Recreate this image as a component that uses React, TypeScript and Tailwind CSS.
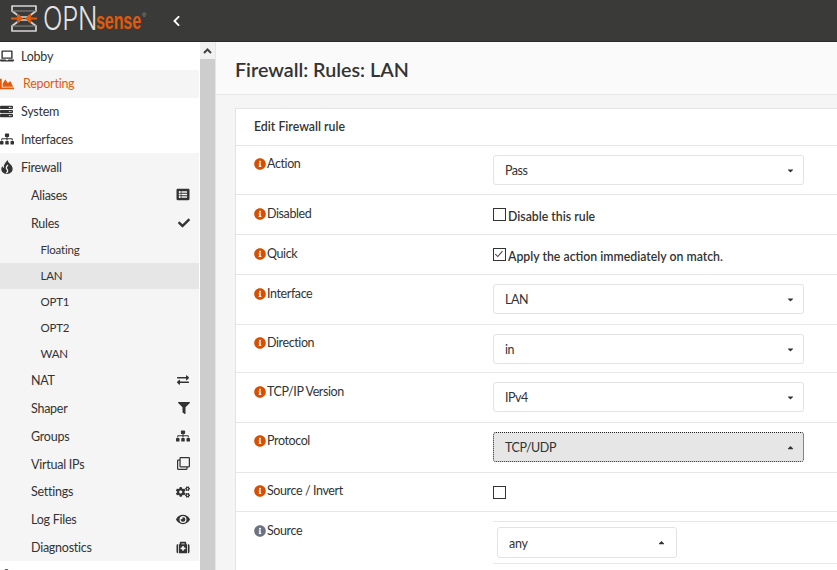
import React from "react";
import { FaLaptop, FaChartArea, FaServer, FaSitemap, FaListAlt, FaCheck, FaExchangeAlt, FaFilter, FaRegClone, FaCogs, FaCog, FaEye, FaMedkit, FaInfoCircle, FaChevronLeft, FaCaretDown, FaCaretUp } from "react-icons/fa";

function Logo() {
  return (
    <div className="flex items-center w-[161px] shrink-0 mb-[4px]">
      <svg width="26" height="27" viewBox="0 0 26 27" className="shrink-0">
        <g fill="none" stroke="#d6d6d6" strokeWidth="1.700" strokeLinejoin="round">
          <path d="M1 1H25V6L17 12H9L1 6Z" />
          <path d="M1 26H25V21L17 15H9L1 21Z" />
          <path d="M1 6H25M1 21H25" stroke="#8a8a8a" strokeWidth="1" />
        </g>
        <g stroke="#e05a0c" strokeWidth="2" fill="#e05a0c">
          <path d="M0 13.500H9" />
          <path d="M17 13.500H26" />
          <path d="M10.500 13.500L7 10.500V16.500Z" />
          <path d="M15.500 13.500L19 10.500V16.500Z" />
        </g>
      </svg>
      <span className="ml-[6px] w-[53px] shrink-0 inline-block origin-left scale-x-[0.8] text-[32px] leading-none font-light text-[#e4e4e4] [font-family:Inter,sans-serif]">OPN</span>
      <span className="mt-[6px] w-[46px] shrink-0 inline-block origin-left scale-x-[0.66] text-[24.500px] leading-none font-bold text-[#e05a0c] [font-family:'Liberation_Sans',sans-serif]">sense</span>
      <span className="mb-[8px] text-[6px] leading-none text-[#9a9a9a] [font-family:'Liberation_Sans',sans-serif]">®</span>
    </div>
  );
}

function Flame() {
  return (
    <svg width="14" height="14" viewBox="0 0 14 14">
      <path d="M7.500 0C8 2.500 10 3.500 11.500 5.500C13 7.500 13 10.500 11.500 12C10.300 13.300 8.800 14 7 14C5 14 3.300 13.300 2.300 12C1 10.300 1 8 2.300 6C2.600 7 3 7.600 3.800 8C3.300 5 5.500 2.500 7.500 0Z" fill="#333" />
      <path d="M8 5C6.200 6.500 5.800 8 7 9.300C8.200 10.600 7.700 12 6.300 13" fill="none" stroke="#f5f5f5" strokeWidth="1.300" />
    </svg>
  );
}

function MenuRow({ icon, label, active, shade }: { icon: React.ReactNode; label?: string; active?: boolean; shade?: boolean }) {
  return (
    <div className={`h-[27.800px] flex items-center ${shade ? "bg-[#f5f5f5]" : "bg-white"} ${active ? "text-[#e35b0f]" : "text-[#333]"}`}>
      <span className="w-[21px] shrink-0 flex items-center">{icon}</span>
      {label && <span className={active ? "ml-[2px] mt-[2px]" : "mt-[2px]"}>{label}</span>}
    </div>
  );
}

function SubRow({ label, icon }: { label: string; icon?: React.ReactNode }) {
  return (
    <div className="h-[27.800px] flex items-center justify-between pl-[31px] pr-[9px] bg-[#f5f5f5] text-[#333]">
      <span className="mt-[2.400px]">{label}</span>
      {icon}
    </div>
  );
}

function LeafRow({ label, active }: { label: string; active?: boolean }) {
  return (
    <div className={`h-[26px] flex items-center pl-[40.500px] text-[11.500px] tracking-[-0.2px] text-[#333] ${active ? "bg-[#e6e6e6]" : "bg-[#f5f5f5]"}`}>{label}</div>
  );
}

function Info({ muted }: { muted?: boolean }) {
  return <FaInfoCircle className={`w-[12px] h-[12px] mr-[1px] shrink-0 -mt-[1px] ${muted ? "text-[#6b7280]" : "text-[#d94f00]"}`} />;
}

function FormRow({ label, h, muted, low, children }: { label: string; h: string; muted?: boolean; low?: boolean; children?: React.ReactNode }) {
  return (
    <div className={`flex border-b border-[#e7e7e7] ${h}`}>
      <div className={`w-[257px] pl-[18px] shrink-0 flex items-start ${low ? "pt-[11px]" : "pt-[10px]"}`}>
        <span className="flex items-center h-[17px] text-[12.500px] tracking-[-0.4px] text-[#333]"><Info muted={muted} />{label}</span>
      </div>
      <div className="flex-1 min-w-0">{children}</div>
    </div>
  );
}

function Select({ value, open, focus }: { value: string; open?: boolean; focus?: boolean }) {
  return (
    <div className={`mt-[9px] w-[311px] h-[30px] rounded-[3px] flex items-center justify-between pl-[11px] pr-[8px] text-[12.500px] tracking-[-0.45px] text-[#333] ${focus ? "bg-[#e6e6e6] border border-dotted border-[#222]" : "bg-white border border-[#e3e3e3]"}`}>
      <span className="mt-[2px]">{value}</span>
      {open ? <FaCaretUp className="w-[9px] h-[9px]" /> : <FaCaretDown className="w-[9px] h-[9px]" />}
    </div>
  );
}

function Check({ checked, label }: { checked?: boolean; label?: string }) {
  return (
    <div className="flex items-start pt-[13px]">
      <div className="w-[13px] h-[13px] border border-[#333] bg-white relative shrink-0 mr-[2px]">
        {checked && (
          <svg viewBox="0 0 13 13" className="absolute inset-0 w-[11px] h-[11px]">
            <path d="M1.500 6L4.500 9L10 2.500" fill="none" stroke="#444" strokeWidth="1.200" />
          </svg>
        )}
      </div>
      {label && <span className="font-semibold text-[12.300px] tracking-[0px] leading-[17px] text-[#333]">{label}</span>}
    </div>
  );
}

export default function App() {
  return (
    <div className="w-[837px] h-[570px] overflow-hidden flex flex-col text-[12.500px] tracking-[-0.25px] [font-family:Lato,sans-serif] bg-[#f5f5f5]">
      <header className="h-[42px] shrink-0 bg-[#3a3a39] border-b border-[#2a2a2a] flex items-center pl-[11px]">
        <Logo />
        <FaChevronLeft className="w-[9px] h-[12px] text-white" />
      </header>
      <div className="flex flex-1 min-h-0">
        <aside className="w-[200px] shrink-0 bg-white overflow-hidden pr-[1px]">
          <MenuRow icon={<FaLaptop className="w-[14px] h-[14px]" />} label="Lobby" />
          <MenuRow active shade icon={<FaChartArea className="w-[14px] h-[14px]" />} label="Reporting" />
          <MenuRow icon={<FaServer className="w-[13px] h-[13px]" />} label="System" />
          <MenuRow icon={<FaSitemap className="w-[14px] h-[14px]" />} label="Interfaces" />
          <MenuRow shade icon={<Flame />} label="Firewall" />
          <SubRow label="Aliases" icon={<FaListAlt className="w-[14px] h-[13px]" />} />
          <SubRow label="Rules" icon={<FaCheck className="w-[12px] h-[12px]" />} />
          <LeafRow label="Floating" />
          <LeafRow label="LAN" active />
          <LeafRow label="OPT1" />
          <LeafRow label="OPT2" />
          <LeafRow label="WAN" />
          <SubRow label="NAT" icon={<FaExchangeAlt className="w-[14px] h-[12px]" />} />
          <SubRow label="Shaper" icon={<FaFilter className="w-[12px] h-[12px]" />} />
          <SubRow label="Groups" icon={<FaSitemap className="w-[14px] h-[14px]" />} />
          <SubRow label="Virtual IPs" icon={<FaRegClone className="w-[13px] h-[13px]" />} />
          <SubRow label="Settings" icon={<FaCogs className="w-[14px] h-[14px]" />} />
          <SubRow label="Log Files" icon={<FaEye className="w-[14px] h-[13px]" />} />
          <SubRow label="Diagnostics" icon={<FaMedkit className="w-[14px] h-[13px]" />} />
          <MenuRow icon={<FaCog className="w-[13px] h-[13px]" />} />
        </aside>
        <div className="w-[16px] shrink-0 flex flex-col bg-[#f1f1f1] border-r border-[#e5e5e5]">
          <div className="h-[17px] flex items-center justify-center">
            <svg width="9" height="6" viewBox="0 0 9 6"><path d="M1 5L4.500 1.500L8 5" fill="none" stroke="#444" strokeWidth="2" /></svg>
          </div>
          <div className="flex-1 bg-[#cdcdcd]" />
        </div>
        <main className="flex-1 min-w-0 overflow-hidden">
          <div className="h-[53px] bg-[#fafafa] border-b border-[#e6e6e6] flex items-center pl-[19px]">
            <h1 className="mt-[4px] text-[19.700px] tracking-[0px] font-semibold text-[#333]">Firewall: Rules: LAN</h1>
          </div>
          <section className="ml-[19px] mt-[13px] w-[640px] bg-white border border-[#e3e3e3]">
            <div className="h-[37px] border-b border-[#e7e7e7] flex items-center pl-[18px] font-semibold text-[12.300px] tracking-[0px] text-[#333]">Edit Firewall rule</div>
            <FormRow label="Action" h="h-[49px]"><Select value="Pass" /></FormRow>
            <FormRow label="Disabled" h="h-[40px]" low><Check label="Disable this rule" /></FormRow>
            <FormRow label="Quick" h="h-[40px]" low><Check checked label="Apply the action immediately on match." /></FormRow>
            <FormRow label="Interface" h="h-[50px]" low><Select value="LAN" /></FormRow>
            <FormRow label="Direction" h="h-[48px]"><Select value="in" /></FormRow>
            <FormRow label="TCP/IP Version" h="h-[50px]" low><Select value="IPv4" /></FormRow>
            <FormRow label="Protocol" h="h-[50px]"><Select value="TCP/UDP" open focus /></FormRow>
            <FormRow label="Source / Invert" h="h-[39px]"><Check /></FormRow>
            <FormRow label="Source" h="h-[60px]" muted low>
              <div className="mt-[9px] border-y border-[#e7e7e7] h-[43px] pl-[4px] pt-[5px]">
                <div className="w-[180px] h-[31px] bg-white border border-[#e3e3e3] rounded-[3px] flex items-center justify-between pl-[11px] pr-[10px] text-[12.500px] text-[#333]">
                  <span className="mt-[3px]">any</span><FaCaretUp className="w-[9px] h-[9px]" />
                </div>
              </div>
            </FormRow>
          </section>
        </main>
      </div>
    </div>
  );
}
